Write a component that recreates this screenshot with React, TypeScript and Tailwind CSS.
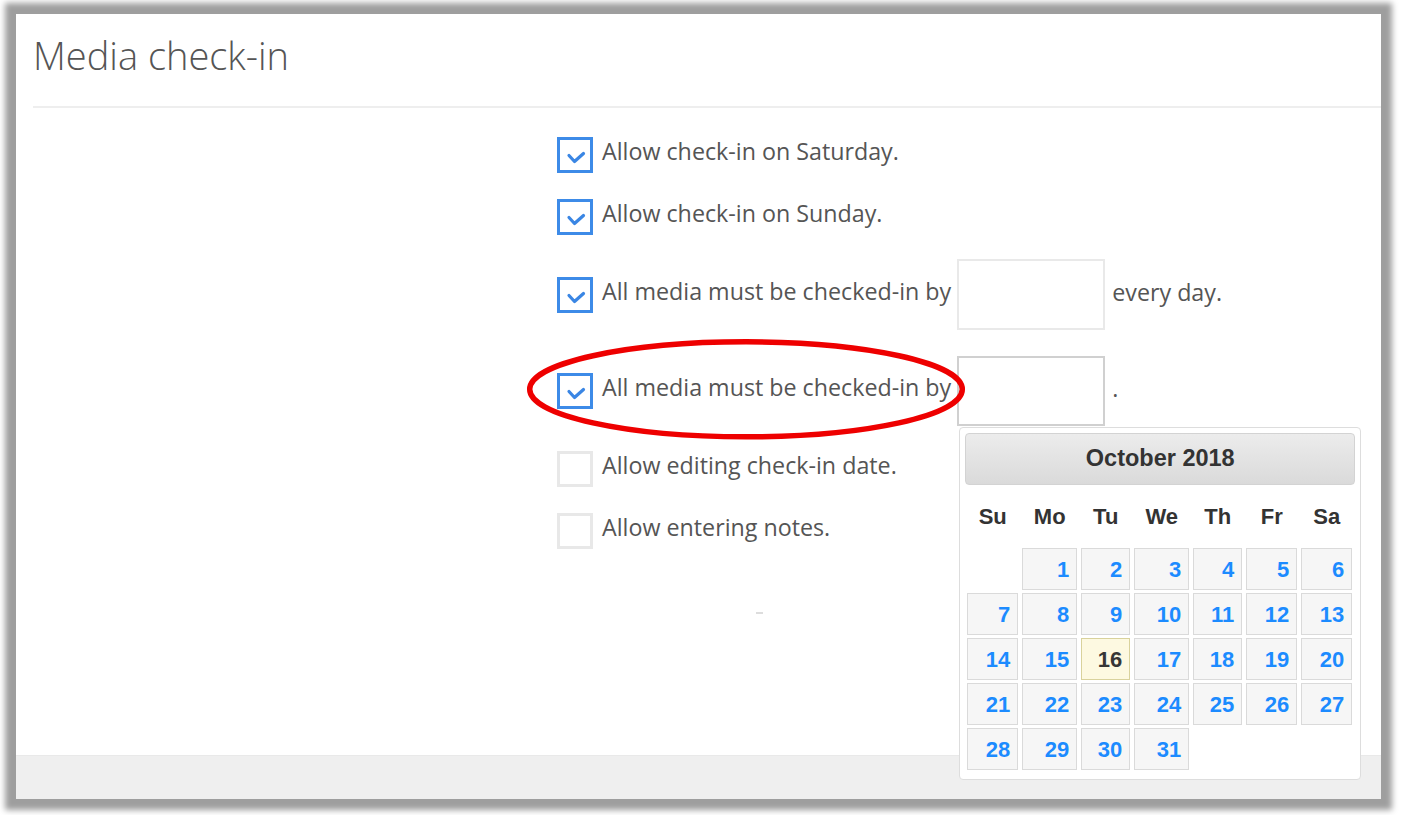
const rows: (number | null)[][] = [
  [null, 1, 2, 3, 4, 5, 6],
  [7, 8, 9, 10, 11, 12, 13],
  [14, 15, 16, 17, 18, 19, 20],
  [21, 22, 23, 24, 25, 26, 27],
  [28, 29, 30, 31, null, null, null],
];

const dayNames = ["Su", "Mo", "Tu", "We", "Th", "Fr", "Sa"];

function Checkbox({ checked }: { checked: boolean }) {
  if (!checked) {
    return <div className="h-[36px] w-[36px] shrink-0 border-[3px] border-[#e8e8e8] bg-white" />;
  }
  return (
    <div className="relative h-[36px] w-[36px] shrink-0 border-[3px] border-[#3d8be8] bg-white">
      <svg className="absolute left-[6px] top-[11px]" width="20" height="14" viewBox="0 0 20 14">
        <path d="M3 4.5 L8.5 10.5 L17.5 2.5" fill="none" stroke="#3a86e4" strokeWidth="3.2" strokeLinecap="round" strokeLinejoin="round" />
      </svg>
    </div>
  );
}

function Label({ children }: { children: React.ReactNode }) {
  return <span className="mb-[7px] ml-[9px] whitespace-nowrap text-[23.25px] text-[#555555]">{children}</span>;
}

function Calendar() {
  return (
    <div className="absolute left-0 top-full z-10 mt-[3px] w-[402px] rounded-[4px] border border-[#dddddd] bg-white p-[5px] pb-[9px] font-['Liberation_Sans',Arial,sans-serif]">
      <div className="flex h-[52px] w-[390px] items-center justify-center rounded-[4px] border border-[#d3d3d3] bg-gradient-to-b from-[#ececec] to-[#dadada] text-[23.5px] font-bold text-[#333333]">
        October 2018
      </div>
      <div className="ml-[2px] grid h-[63px] grid-cols-[51px_55px_49px_55px_49px_51px_51px] items-center gap-x-[4px] text-center text-[22px] font-bold text-[#333333]">
        {dayNames.map((d) => (
          <span key={d}>{d}</span>
        ))}
      </div>
      <div className="ml-[2px] grid grid-cols-[51px_55px_49px_55px_49px_51px_51px] gap-x-[4px] gap-y-[3px]">
        {rows.flat().map((d, i) =>
          d === null ? (
            <div key={i} className="h-[42px]" />
          ) : d === 16 ? (
            <div key={i} className="flex h-[42px] items-center justify-end border border-[#d9d29c] bg-[#fdf9e1] pr-[7px] text-[22px] font-bold text-[#363636]">
              {d}
            </div>
          ) : (
            <div key={i} className="flex h-[42px] items-center justify-end border border-[#dadada] bg-[#f6f6f6] pr-[7px] text-[22px] font-bold text-[#1c8bff]">
              {d}
            </div>
          )
        )}
      </div>
    </div>
  );
}

export default function App() {
  return (
    <div className="h-[815px] w-[1401px] overflow-hidden bg-white pl-[16px] pt-[14px] font-['Open_Sans',sans-serif]">
      <div className="relative flex h-[785px] w-[1365px] flex-col bg-white shadow-[0_0_6px_11px_#9e9e9e]">
        <div className="h-[92px] pl-[17px] pt-[22px]">
          <h1 className="text-[38px] font-light leading-none text-[#555555]">Media check-in</h1>
        </div>
        <div className="ml-[17px] h-[2px] bg-[#eeeeee]" />

        <div className="flex flex-1 flex-col pl-[541px] pt-[29px]">
          <div className="flex h-[36px] items-center">
            <Checkbox checked />
            <Label>Allow check-in on Saturday.</Label>
          </div>
          <div className="mt-[26px] flex h-[36px] items-center">
            <Checkbox checked />
            <Label>Allow check-in on Sunday.</Label>
          </div>
          <div className="mt-[24px] flex h-[71px] items-center">
            <Checkbox checked />
            <Label>All media must be checked-in by</Label>
            <div className="ml-[6px] h-[71px] w-[148px] shrink-0 border-2 border-[#e9e9e9] bg-white" />
            <span className="mb-[5px] ml-[7px] whitespace-nowrap text-[23.25px] text-[#555555]">every day.</span>
          </div>
          <div className="mt-[26px] flex h-[70px] items-center">
            <Checkbox checked />
            <Label>All media must be checked-in by</Label>
            <div className="relative ml-[6px] h-[70px] w-[148px] shrink-0 border-2 border-[#d0d0d0] bg-white">
              <Calendar />
            </div>
            <span className="mb-[5px] ml-[7px] text-[23.25px] text-[#555555]">.</span>
          </div>
          <div className="mt-[25px] flex h-[36px] items-center">
            <Checkbox checked={false} />
            <Label>Allow editing check-in date.</Label>
          </div>
          <div className="mt-[26px] flex h-[36px] items-center">
            <Checkbox checked={false} />
            <Label>Allow entering notes.</Label>
          </div>
          <div className="ml-[199px] mt-[63px] h-[2px] w-[7px] bg-[#dddddd]" />
        </div>

        <div className="h-[44px] border-t border-[#e9e9e9] bg-[#efefef]" />

        <svg className="pointer-events-none absolute left-[500px] top-[320px] z-20" width="460" height="112" viewBox="0 0 460 112">
          <ellipse cx="230" cy="55.3" rx="216.3" ry="47.5" fill="none" stroke="#ee0000" strokeWidth="5.5" />
        </svg>
      </div>
    </div>
  );
}
